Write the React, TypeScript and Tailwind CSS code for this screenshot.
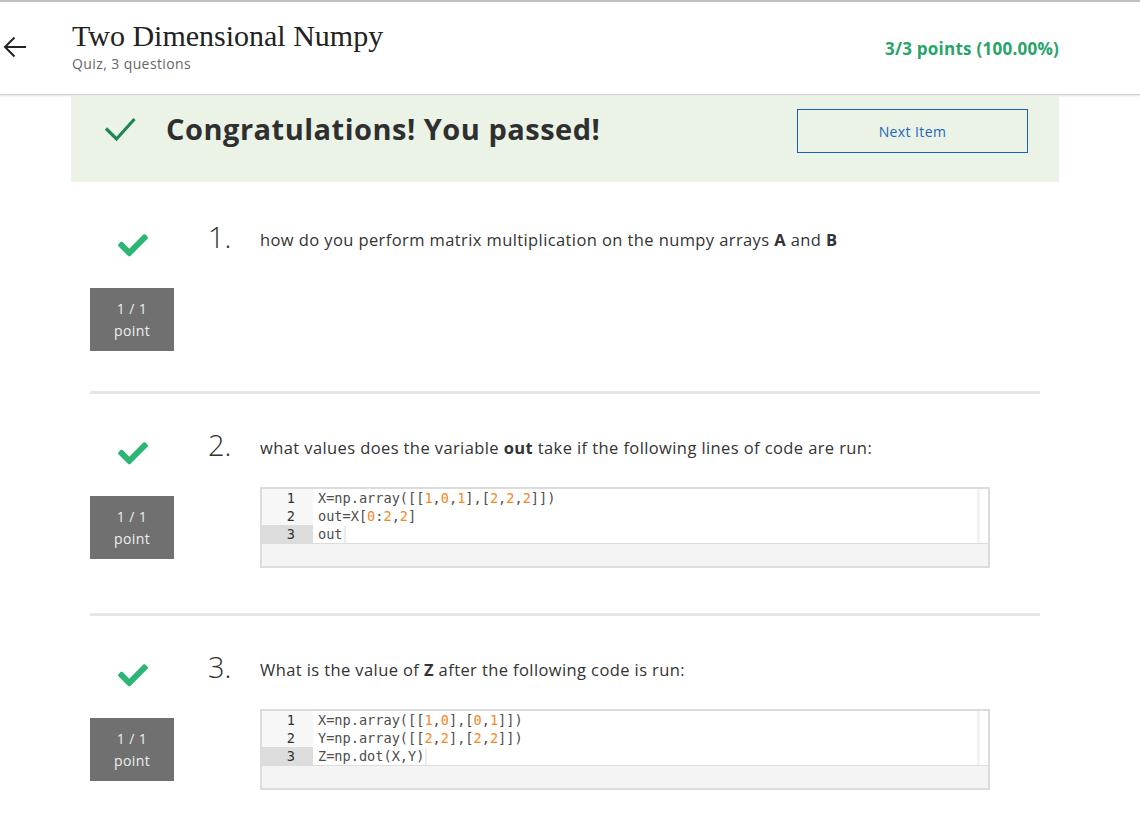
import React from 'react';

const sans = { fontFamily: '"Open Sans", "Noto Sans", Arial, sans-serif' };
const serif = { fontFamily: '"Liberation Serif", "DejaVu Serif", Georgia, serif' };
const mono = { fontFamily: '"DejaVu Sans Mono", "Liberation Mono", monospace' };

function BackArrow() {
  return (
    <svg width="26" height="24" viewBox="0 0 26 24" fill="none">
      <path d="M3 12H24" stroke="#222" strokeWidth="2" />
      <path d="M12.5 2.5L3 12l9.5 9.5" stroke="#222" strokeWidth="2" />
    </svg>
  );
}

function ThinCheck() {
  return (
    <svg width="34" height="26" viewBox="0 0 34 26" fill="none">
      <path d="M2 12.5l10.5 10.5L30.5 3" stroke="#1f8556" strokeWidth="3.2" />
    </svg>
  );
}

function HeavyCheck() {
  return (
    <svg width="30" height="23" viewBox="0 64 512 390">
      <path
        fill="#2bb673"
        d="M173.898 439.404l-166.4-166.4c-9.997-9.997-9.997-26.206 0-36.204l36.203-36.204c9.997-9.998 26.207-9.998 36.204 0L192 312.69 432.095 72.596c9.997-9.997 26.207-9.997 36.204 0l36.203 36.204c9.997 9.997 9.997 26.206 0 36.204l-294.4 294.401c-9.998 9.997-26.207 9.997-36.204-.001z"
      />
    </svg>
  );
}

// colour the digits like the editor theme does
function CodeLine({ text, tail }: { text: string; tail?: boolean }) {
  const parts = text.split(/(\d)/);
  return (
    <div className="h-[18px] leading-[18px] whitespace-pre flex items-center">
      <span>
        {parts.map((p, i) =>
          /\d/.test(p) ? (
            <span key={i} className="text-[#f5871f]">
              {p}
            </span>
          ) : (
            <span key={i}>{p}</span>
          )
        )}
      </span>
      {tail && <span className="inline-block w-[2px] h-[17px] bg-[#ececec] ml-[1px]" />}
    </div>
  );
}

function CodeBlock({ lines }: { lines: string[] }) {
  return (
    <div className="mt-[27px] w-[730px] border-2 border-[#dcdcdc] bg-white" style={mono}>
      <div className="h-[54px] overflow-hidden flex text-[13.6px] text-[#4d4d4c]">
        <div className="w-[51px] bg-[#f7f7f7] text-[#333] shrink-0">
          {lines.map((_, i) => (
            <div
              key={i}
              className={
                'h-[18px] leading-[18px] text-right pr-[18px] ' +
                (i === lines.length - 1 ? 'bg-[#dcdcdc]' : '')
              }
            >
              {i + 1}
            </div>
          ))}
        </div>
        <div className="flex-1 pl-[5px]">
          {lines.map((l, i) => (
            <CodeLine key={i} text={l} tail={i === lines.length - 1} />
          ))}
        </div>
        <div className="w-[3px] bg-[#f2f2f2] mr-[8px] shrink-0" />
      </div>
      <div className="h-[23px] border-t border-[#dcdcdc] bg-[#f4f4f4]" />
    </div>
  );
}

function Question({
  num,
  children,
  code,
  pb,
  last,
}: {
  num: number;
  children: React.ReactNode;
  code?: string[];
  pb: number;
  last?: boolean;
}) {
  return (
    <div>
      <div className="flex items-start" style={{ paddingBottom: pb }}>
        <div className="w-[84px] flex flex-col items-center shrink-0">
          <div className="mt-[6px] ml-[2px]">
            <HeavyCheck />
          </div>
          <div className="mt-[31px] w-[84px] h-[63px] bg-[#707070] text-[#eeeeee] text-[14px] tracking-[0.4px] leading-[22px] flex flex-col items-center justify-center">
            <div>1 / 1</div>
            <div>point</div>
          </div>
        </div>
        <div className="ml-[34px] w-[52px] shrink-0 text-[29px] leading-[29px] font-light text-[#333] mt-[-6px]">
          {num}.
        </div>
        <div className="flex-1">
          <div className="text-[16.5px] tracking-[0.4px] leading-[24px] text-[#333]">{children}</div>
          {code && <CodeBlock lines={code} />}
        </div>
      </div>
      {!last && <div className="h-[3px] bg-[#e6e6e6]" />}
    </div>
  );
}

export default function App() {
  return (
    <div className="w-[1140px] min-h-[817px] bg-white overflow-hidden" style={sans}>
      <header className="h-[95px] border-t-2 border-[#bfbfbf] border-b border-b-[#d2d2d2] shadow-[0_1px_2px_rgba(0,0,0,0.12)] flex items-start">
        <div className="pt-[33px] pl-[2px]">
          <BackArrow />
        </div>
        <div className="ml-[44px] pt-[16px]">
          <div className="text-[30px] leading-[35px] text-[#222]" style={serif}>
            Two Dimensional Numpy
          </div>
          <div className="text-[14px] tracking-[0.4px] leading-[20px] text-[#666] mt-[1px]">
            Quiz, 3 questions
          </div>
        </div>
        <div className="ml-auto mr-[81px] pt-[34px] text-[17px] tracking-[0.25px] font-bold text-[#28a46b]">
          3/3 points (100.00%)
        </div>
      </header>

      <div className="ml-[71px] w-[988px] h-[87px] bg-[#ebf3e6] flex items-start pt-[14px]">
        <div className="h-[44px] flex items-center w-full">
          <div className="ml-[33px] mt-[-4px]">
            <ThinCheck />
          </div>
          <div className="ml-[28px] text-[29px] tracking-[0.5px] font-bold text-[#2f2f2f] leading-[36px] mt-[-4px]">
            Congratulations! You passed!
          </div>
          <button className="ml-auto mr-[31px] w-[231px] h-[44px] border-[1.5px] border-[#1f5fb0] text-[14px] tracking-[0.4px] text-[#2465bd] bg-transparent">
            Next Item
          </button>
        </div>
      </div>

      <div className="ml-[90px] w-[950px] mt-[4px]">
        <div className="pt-[42px]">
          <Question num={1} pb={40}>
            how do you perform matrix multiplication on the numpy arrays <b>A</b> and <b>B</b>
          </Question>
        </div>
        <div className="pt-[42px]">
          <Question
            num={2}
            pb={45}
            code={['X=np.array([[1,0,1],[2,2,2]])', 'out=X[0:2,2]', 'out']}
          >
            what values does the variable <b>out</b> take if the following lines of code are run:
          </Question>
        </div>
        <div className="pt-[42px]">
          <Question
            num={3}
            pb={30}
            last
            code={['X=np.array([[1,0],[0,1]])', 'Y=np.array([[2,2],[2,2]])', 'Z=np.dot(X,Y)']}
          >
            What is the value of <b>Z</b> after the following code is run:
          </Question>
        </div>
      </div>
    </div>
  );
}
